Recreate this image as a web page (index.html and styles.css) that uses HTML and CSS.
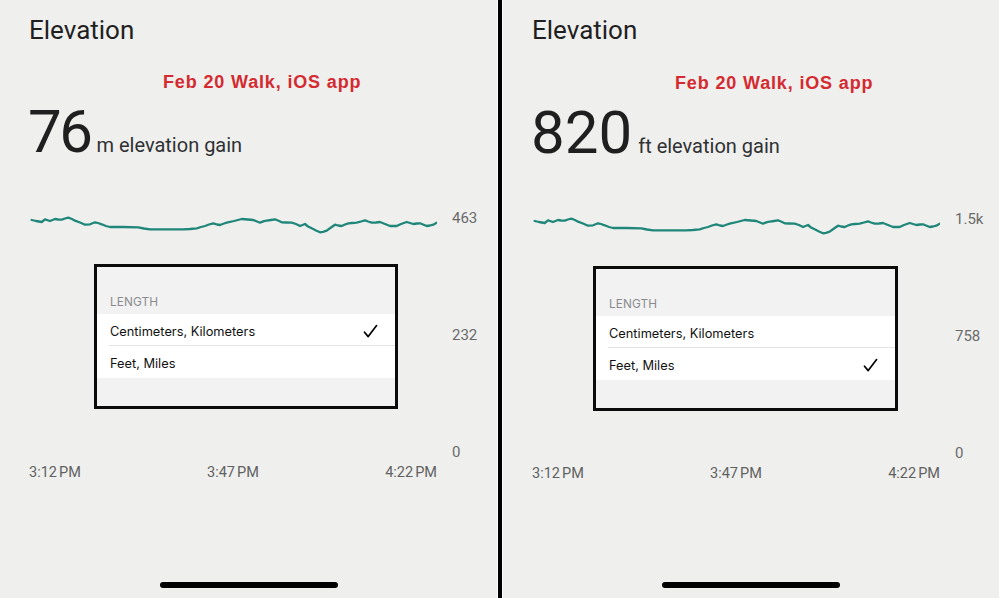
FILE: index.html
```html
<!DOCTYPE html>
<html lang="en">
<head>
<meta charset="utf-8">
<title>Elevation</title>
<link rel="stylesheet" href="styles.css">
</head>
<body>
<div class="screen">
  <section class="panel">
    <h1 class="title">Elevation</h1>
    <p class="note note--left">Feb 20 Walk, iOS app</p>
    <div class="stat"><span class="stat-value stat-value--narrow">76</span><span class="stat-unit">m elevation gain</span></div>
    <div class="chart">
      <div class="plot">
        <svg class="line" width="409" height="254" viewBox="0 0 409 254"><polyline points="3.7,12 8,13 13.7,14 17,11.3 22,13 27,11 30,11.5 33.7,11.7 37,10.5 40.3,9.7 44,11 47,12.7 52,14.5 57,16.7 62,16.3 67,14.3 70,15 73.7,16.3 78,18 82,19 95,19 110.3,19.3 116,20.5 122,21.3 140,21.3 155.3,21.3 162,21 168.7,20.3 173,19 177,18 181,16.5 185.3,15.3 189,16.5 192,17 196,15.5 198.7,14.7 206,13 213.7,11 220,11.5 225.3,12 229,13.5 232,14.7 236,13.2 238.7,12.7 243,12 247,11.3 250,12.5 253.7,14.3 258,14.5 263.7,14.7 268,16 272,18 277,16 280,18.5 283.7,20.3 288,22.5 292,24.3 295,23.8 298.7,22.7 303,19.5 307,16.7 310,17.5 313.7,18 317,16.5 320.3,15.3 324,15 328.7,14.7 333,13.5 337,12.3 340,13.5 343.7,14.7 348,14.5 352,14 357,16 362,18 365,18 368.7,18 373,16 378.7,14 382,15 385.3,16 389,15.5 392,15.3 395,16.5 398.7,18 402,17.5 405.3,16.7 408.7,14.7"/></svg>
        <div class="sheet sheet--left">
          <div class="sheet-head">LENGTH</div>
          <div class="sheet-row sheet-row--divided"><span>Centimeters, Kilometers</span><svg class="check" width="15" height="15" viewBox="0 0 15 15"><path d="M1.5 8.2 L5.2 12.6 L13.6 1.6"/></svg></div>
          <div class="sheet-row"><span>Feet, Miles</span></div>
          <div class="sheet-foot"></div>
        </div>
      </div>
      <div class="yaxis"><span>463</span><span>232</span><span>0</span></div>
    </div>
    <div class="xaxis"><span>3:12 PM</span><span>3:47 PM</span><span>4:22 PM</span></div>
    <div class="home"></div>
  </section>
  <div class="divider"></div>
  <section class="panel">
    <h1 class="title">Elevation</h1>
    <p class="note note--right">Feb 20 Walk, iOS app</p>
    <div class="stat"><span class="stat-value">820</span><span class="stat-unit">ft elevation gain</span></div>
    <div class="chart">
      <div class="plot">
        <svg class="line" width="409" height="254" viewBox="0 0 409 254"><polyline points="3.7,12 8,13 13.7,14 17,11.3 22,13 27,11 30,11.5 33.7,11.7 37,10.5 40.3,9.7 44,11 47,12.7 52,14.5 57,16.7 62,16.3 67,14.3 70,15 73.7,16.3 78,18 82,19 95,19 110.3,19.3 116,20.5 122,21.3 140,21.3 155.3,21.3 162,21 168.7,20.3 173,19 177,18 181,16.5 185.3,15.3 189,16.5 192,17 196,15.5 198.7,14.7 206,13 213.7,11 220,11.5 225.3,12 229,13.5 232,14.7 236,13.2 238.7,12.7 243,12 247,11.3 250,12.5 253.7,14.3 258,14.5 263.7,14.7 268,16 272,18 277,16 280,18.5 283.7,20.3 288,22.5 292,24.3 295,23.8 298.7,22.7 303,19.5 307,16.7 310,17.5 313.7,18 317,16.5 320.3,15.3 324,15 328.7,14.7 333,13.5 337,12.3 340,13.5 343.7,14.7 348,14.5 352,14 357,16 362,18 365,18 368.7,18 373,16 378.7,14 382,15 385.3,16 389,15.5 392,15.3 395,16.5 398.7,18 402,17.5 405.3,16.7 408.7,14.7"/></svg>
        <div class="sheet sheet--right">
          <div class="sheet-head">LENGTH</div>
          <div class="sheet-row sheet-row--divided"><span>Centimeters, Kilometers</span></div>
          <div class="sheet-row"><span>Feet, Miles</span><svg class="check" width="15" height="15" viewBox="0 0 15 15"><path d="M1.5 8.2 L5.2 12.6 L13.6 1.6"/></svg></div>
          <div class="sheet-foot"></div>
        </div>
      </div>
      <div class="yaxis"><span>1.5k</span><span>758</span><span>0</span></div>
    </div>
    <div class="xaxis"><span>3:12 PM</span><span>3:47 PM</span><span>4:22 PM</span></div>
    <div class="home"></div>
  </section>
</div>
</body>
</html>
```

FILE: styles.css
```css
* { box-sizing: border-box; }

html, body {
  margin: 0;
  padding: 0;
  background: #eff0ee;
}

.screen {
  display: flex;
  width: 999px;
  height: 598px;
  overflow: hidden;
}

.panel {
  flex: 0 0 497px;
  display: flex;
  flex-direction: column;
  padding: 14px 0 10px 28px;
  background: #eff0ee;
  font-family: Roboto, "Liberation Sans", sans-serif;
  color: #202124;
}

.panel:last-child {
  flex: 1 1 auto;
}

.divider {
  flex: 0 0 6px;
  background: #000;
  border-left: 1px solid #fbfbfb;
  border-right: 1px solid #fbfbfb;
}

.title {
  margin: 0 0 0 1px;
  font-size: 26px;
  line-height: 32px;
  font-weight: 400;
  color: #1f1f1f;
}

.note {
  margin: 25px 0 0;
  font-family: "Liberation Sans", Arial, sans-serif;
  font-weight: 700;
  font-size: 18px;
  line-height: 22px;
  letter-spacing: 0.85px;
  color: #d42a30;
}

.note--left { padding-left: 135px; }
.note--right { padding-left: 144px; margin-top: 26px; }

.stat {
  display: flex;
  align-items: baseline;
  margin-top: 9px;
  height: 60px;
}

.stat-value {
  font-size: 60px;
  line-height: 60px;
  font-weight: 400;
  color: #1f1f1f;
  letter-spacing: 0;
}

.stat-value--narrow {
  letter-spacing: -2.5px;
}

.stat-unit {
  margin-left: 6px;
  font-size: 20px;
  color: #2f3134;
}

.chart {
  display: grid;
  grid-template-columns: 409px auto;
  column-gap: 15px;
  margin-top: 46px;
  height: 254px;
}

.plot {
  display: grid;
  grid-template-areas: "stack";
  align-items: start;
  justify-items: start;
}

.line {
  grid-area: stack;
  display: block;
}

.line polyline {
  fill: none;
  stroke: #1f8679;
  stroke-width: 2.3;
  stroke-linejoin: round;
  stroke-linecap: round;
}

.sheet {
  grid-area: stack;
  width: 304px;
  height: 145px;
  border: 3px solid #0b0b0b;
  background: #f2f2f2;
  display: flex;
  flex-direction: column;
  font-family: Inter, "Liberation Sans", sans-serif;
}

.sheet--left { margin: 56px 0 0 66px; }
.sheet--right { margin: 57px 0 0 62px; width: 305px; }

.sheet-head {
  height: 47px;
  display: flex;
  align-items: flex-end;
  padding: 0 0 5px 13px;
  font-size: 11.8px;
  line-height: 14px;
  color: #8a8a8e;
  letter-spacing: 0.1px;
}

.sheet-row {
  height: 32px;
  display: flex;
  align-items: center;
  justify-content: space-between;
  padding: 2px 17px 0 13px;
  background: #fff;
  font-size: 12.8px;
  color: #111;
}

.sheet-row--divided {
  background: linear-gradient(#e4e4e4, #e4e4e4) no-repeat 12px 100% / calc(100% - 12px) 1px, #fff;
}

.check path {
  fill: none;
  stroke: #000;
  stroke-width: 1.7;
  stroke-linecap: round;
  stroke-linejoin: round;
}

.sheet-foot {
  flex: 1 1 auto;
  background: #f2f2f2;
}

.yaxis {
  display: flex;
  flex-direction: column;
  justify-content: space-between;
  font-size: 15px;
  line-height: 20px;
  color: #6a6a6a;
}

.xaxis {
  display: flex;
  justify-content: space-between;
  width: 409px;
  margin-top: 1px;
  padding-left: 1px;
  font-size: 14.5px;
  line-height: 20px;
  word-spacing: -1.5px;
  color: #5f6160;
}

.home {
  margin: auto auto 0;
  position: relative;
  left: -14px;
  width: 178px;
  height: 6px;
  border-radius: 3px;
  background: #000;
}
```
